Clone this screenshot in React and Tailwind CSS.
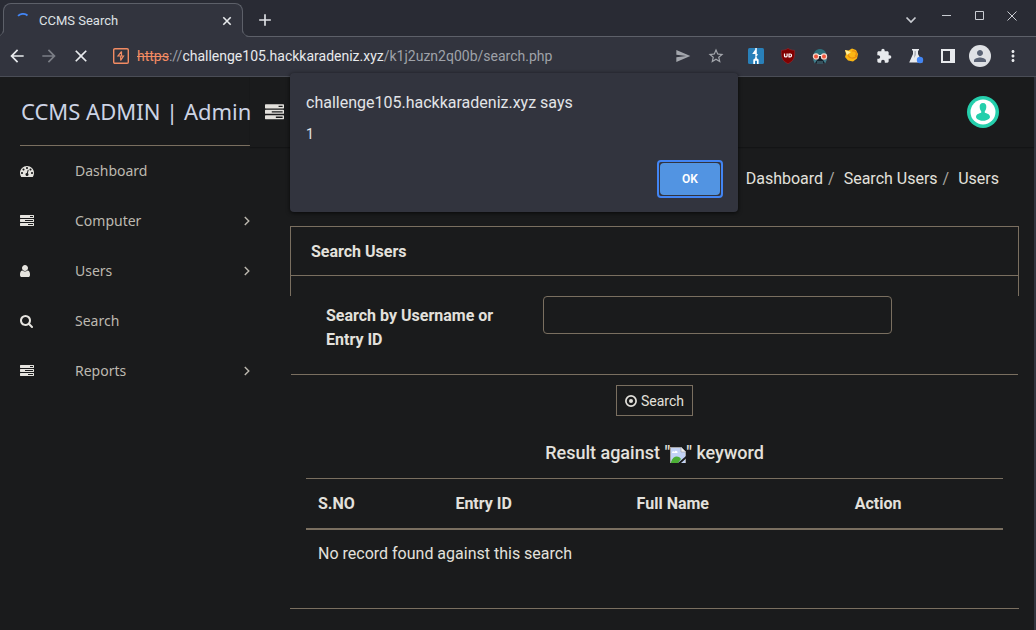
import React from "react";
import { MdArrowBack, MdArrowForward, MdClose, MdSend, MdStarOutline, MdExtension, MdPerson, MdMoreVert, MdAdd } from "react-icons/md";

const TASKS =
  "M1024 1408h640v-128h-640v128zm-384-512h1024v-128h-1024v128zm640-512h384v-128h-384v128zm512 832v256q0 26-19 45t-45 19h-1664q-26 0-45-19t-19-45v-256q0-26 19-45t45-19h1664q26 0 45 19t19 45zm0-512v256q0 26-19 45t-45 19h-1664q-26 0-45-19t-19-45v-256q0-26 19-45t45-19h1664q26 0 45 19t19 45zm0-512v256q0 26-19 45t-45 19h-1664q-26 0-45-19t-19-45v-256q0-26 19-45t45-19h1664q26 0 45 19t19 45z";
const GAUGE =
  "M384 1152q0-53-37.5-90.5t-90.5-37.5-90.5 37.5-37.5 90.5 37.5 90.5 90.5 37.5 90.5-37.5 37.5-90.5zm192-448q0-53-37.5-90.5t-90.5-37.5-90.5 37.5-37.5 90.5 37.5 90.5 90.5 37.5 90.5-37.5 37.5-90.5zm428 481l101-382q6-26-7.5-48.5t-38.5-29.5-48 6.5-30 39.5l-101 382q-60 5-107 43.5t-63 98.5q-20 77 20 146t117 89 146-20 89-117q16-60-6-117t-72-91zm660-33q0-53-37.5-90.5t-90.5-37.5-90.5 37.5-37.5 90.5 37.5 90.5 90.5 37.5 90.5-37.5 37.5-90.5zm-640-640q0-53-37.5-90.5t-90.5-37.5-90.5 37.5-37.5 90.5 37.5 90.5 90.5 37.5 90.5-37.5 37.5-90.5zm448 192q0-53-37.5-90.5t-90.5-37.5-90.5 37.5-37.5 90.5 37.5 90.5 90.5 37.5 90.5-37.5 37.5-90.5zm320 448q0 261-141 483-19 29-54 29h-1402q-35 0-54-29-141-221-141-483 0-182 71-348t191-286 286-191 348-71 348 71 286 191 191 286 71 348z";
const USER =
  "M1536 1399q0 109-62.5 187t-150.5 78h-854q-88 0-150.5-78t-62.5-187q0-85 8.5-160.5t31.5-152 58.5-131 94-89 134.5-34.5q131 128 313 128t313-128q76 0 134.5 34.5t94 89 58.5 131 31.5 152 8.5 160.5zm-256-887q0 159-112.5 271.5t-271.5 112.5-271.5-112.5-112.5-271.5 112.5-271.5 271.5-112.5 271.5 112.5 112.5 271.5z";
const LENS =
  "M1216 832q0-185-131.5-316.5t-316.5-131.5-316.5 131.5-131.5 316.5 131.5 316.5 316.5 131.5 316.5-131.5 131.5-316.5zm512 832q0 52-38 90t-90 38q-54 0-90-38l-343-342q-179 124-399 124-143 0-273.5-55.5t-225-150-150-225-55.5-273.5 55.5-273.5 150-225 225-150 273.5-55.5 273.5 55.5 225 150 150 225 55.5 273.5q0 220-124 399l343 343q37 37 37 90z";

const MENU = [
  { label: "Dashboard", path: GAUGE, box: "0 0 1792 1792" },
  { label: "Computer", path: TASKS, box: "0 0 1792 1792", more: true },
  { label: "Users", path: USER, box: "256 0 1792 1792", more: true },
  { label: "Search", path: LENS, box: "64 0 1792 1792" },
  { label: "Reports", path: TASKS, box: "0 0 1792 1792", more: true },
];

function TabStrip() {
  return (
    <div className="flex h-[37px] items-end border-b border-[#5d6069] bg-[#292b34]">
      <div className="relative -mb-px ml-[3px] flex h-[34px] w-60 items-center rounded-t-lg border border-b-0 border-[#5d6069] bg-[#32343e] px-[11px]">
        <svg className="absolute bottom-0 -left-2 h-2 w-2" viewBox="0 0 8 8" fill="none">
          <path d="M0 8C5 8 8 5 8 0V8Z" fill="#32343e" />
          <path d="M0 7.5C4.500 7.500 7.500 4.500 7.500 0" stroke="#5d6069" />
        </svg>
        <svg className="absolute -right-2 bottom-0 h-2 w-2" viewBox="0 0 8 8" fill="none">
          <path d="M8 8C3 8 0 5 0 0V8Z" fill="#32343e" />
          <path d="M8 7.500C3.500 7.500 .5 4.500 .5 0" stroke="#5d6069" />
        </svg>
        <svg className="h-4 w-4" viewBox="0 0 16 16" fill="none">
          <path d="M3 2.800A7.200 7.200 0 0 1 12.500 2.500" stroke="#4285f4" strokeWidth="1.800" />
        </svg>
        <span className="ml-2 flex-1 text-[13px] text-[#dfe1e5]">CCMS Search</span>
        <button aria-label="Close tab" className="-mr-1 text-[#e8eaed]">
          <svg className="h-4 w-4" viewBox="0 0 16 16" stroke="currentColor" strokeWidth="1.600">
            <path d="M4.300 4.300l7.400 7.400M11.700 4.300l-7.400 7.400" />
          </svg>
        </button>
      </div>
      <button aria-label="New tab" className="ml-3 flex h-8 items-center text-[#dfe1e5]">
        <MdAdd size={20} />
      </button>
      <div className="mr-[18px] ml-auto flex h-9 items-center gap-[21px] text-[#c9ccd2]">
        <button aria-label="Search tabs" className="mt-1 mr-0.5">
          <svg className="h-3 w-3" viewBox="0 0 12 12" fill="none" stroke="currentColor" strokeWidth="1.700">
            <path d="M1.500 3.500L6 8l4.500-4.500" />
          </svg>
        </button>
        <button aria-label="Minimize" className="mb-1">
          <svg className="h-3 w-3" viewBox="0 0 12 12" stroke="currentColor"><path d="M2 5.500h9" /></svg>
        </button>
        <button aria-label="Maximize" className="mb-1">
          <svg className="h-3 w-3" viewBox="0 0 12 12" fill="none" stroke="currentColor"><path d="M2.500 1.500h8v8h-8z" /></svg>
        </button>
        <button aria-label="Close" className="mb-1">
          <svg className="h-3 w-3" viewBox="0 0 12 12" stroke="currentColor"><path d="M1.500 1.500l9 9M10.500 1.500l-9 9" /></svg>
        </button>
      </div>
    </div>
  );
}

function Toolbar() {
  return (
    <div className="flex h-10 items-center border-b border-[#4a4d56] bg-[#32343e] pr-3.5 pb-px pl-[7px] text-[#e8eaed]">
      <div className="flex gap-3">
        <button aria-label="Back"><MdArrowBack size={20} /></button>
        <button aria-label="Forward" className="text-[#7b7e86]"><MdArrowForward size={20} /></button>
        <button aria-label="Stop"><MdClose size={20} /></button>
      </div>
      <svg className="mr-2 ml-[22px] h-4 w-4 shrink-0" viewBox="0 0 16 16" fill="none">
        <rect x=".7" y=".7" width="14.600" height="14.600" rx="1.200" stroke="#f28b63" strokeWidth="1.400" />
        <path d="M8.600 3.300L5 8h5.500L7.500 12.600M8.500 3.500V8M7.700 8v4.400" stroke="#f28b63" strokeWidth="1.200" />
      </svg>
      <div className="flex-1 text-sm text-[#9fa2a9]">
        <span className="text-[#f28b63] line-through">https</span>://
        <span className="text-[#e8eaed]">challenge105.hackkaradeniz.xyz</span>/k1j2uzn2q00b/search.php
      </div>
      <div className="flex items-center gap-4 text-[#a3a6ac]">
        <button aria-label="Share"><MdSend size={16} /></button>
        <button aria-label="Bookmark"><MdStarOutline size={18} /></button>
      </div>
      <div className="ml-[23px] flex items-center gap-4">
        <svg className="h-4 w-4" viewBox="0 0 16 16">
          <rect width="16" height="16" rx="1.500" fill="#2980b9" />
          <path d="M8.800 0v6.200h1.400L8.500 8.500H7.300V6H4.200L7.300 1.500V0z" fill="#fff" />
          <path d="M7.200 8.500h1.600v1.700l1.800 1.300V16H9v-3.200H7V16H5.300v-4.500l1.900-1.300z" fill="#fff" />
        </svg>
        <svg className="h-4 w-4" viewBox="0 0 16 16">
          <path d="M8 .3c2 1.500 4 2 6.500 2C15 9 14 13 8 15.700 2 13 1 9 1.500 2.300 4 2.300 6 1.800 8 .3z" fill="#800000" stroke="#a32a30" strokeWidth=".5" />
          <path d="M4.500 5.500V8c0 1.200 2.600 1.200 2.600 0V5.500M9 6v2.900h1.200c1.700 0 1.700-2.900 0-2.900z" fill="none" stroke="#fff" strokeWidth="1.200" />
        </svg>
        <svg className="h-4 w-4" viewBox="0 0 16 16">
          <path d="M1.500 8C1.500-1.500 14.500-1.500 14.500 8z" fill="#2c6e79" />
          <path d="M3 8h10v7H3z" fill="#15202b" />
          <path d="M5 13h6v3H5z" fill="#36515c" />
          <path d="M.8 11l2 4.500L5 12zM15.200 11l-2 4.500L11 12z" fill="#417f8d" />
          <circle cx="4" cy="8.500" r="2.600" fill="#f0573c" stroke="#f3d6cb" strokeWidth="1.200" />
          <circle cx="12" cy="8.500" r="2.600" fill="#f0573c" stroke="#f3d6cb" strokeWidth="1.200" />
          <path d="M6.500 7.500h3" stroke="#fff" />
        </svg>
        <svg className="h-4 w-4" viewBox="0 0 16 16">
          <path d="M1 2l3.500.5L8 .5l4 1.500 2 4-1 4.500L9 13.500 4 12.500 1 9 2 6z" fill="#fbb613" />
          <path d="M4 4c-1 6 5 8 9 4M8 3c4-1 6 3 3 5" fill="none" stroke="#e98c10" strokeWidth="1.200" />
          <path d="M1 2l6 2-4 3z" fill="#fff09b" />
        </svg>
        <button aria-label="Extensions"><MdExtension size={16} /></button>
        <svg className="h-4 w-4" viewBox="0 0 16 16">
          <path d="M4 1h7v1.500h-1V6l4.500 8.500H1.200L5 6V2.500H4z" fill="#e8eaed" />
          <path d="M6.500 3h1.500v4l-2 3z" fill="#777c85" opacity=".5" />
          <circle cx="12" cy="12" r="3.200" fill="#4285f4" />
        </svg>
        <svg className="h-4 w-4" viewBox="0 0 16 16">
          <path fillRule="evenodd" d="M1 1h14v14H1zM3 3v10h7V3z" fill="#e8eaed" />
        </svg>
        <button aria-label="Profile" className="-mx-[3px] flex h-[22px] w-[22px] items-center justify-center rounded-full bg-[#dfe1e5] text-[#5a6274]">
          <MdPerson size={18} />
        </button>
        <button aria-label="Menu"><MdMoreVert size={18} /></button>
      </div>
    </div>
  );
}

function AlertDialog() {
  return (
    <div role="alertdialog" aria-labelledby="alert-title" className="absolute top-[73px] left-[290px] z-10 w-[448px] rounded bg-[#32343e] pt-[18px] pr-[15px] pb-3.5 pl-4 text-[#e2e4e8] shadow-[0_1px_4px_rgba(0,0,0,0.7)]">
      <h2 id="alert-title" className="text-base">challenge105.hackkaradeniz.xyz says</h2>
      <p className="mt-2 text-sm leading-[22px]">1</p>
      <div className="mt-[15px] flex justify-end">
        <button className="rounded border-2 border-[#4285f4] p-px">
          <span className="flex h-8 w-[60px] items-center justify-center rounded-sm bg-[#5294e2] text-xs font-semibold text-white">OK</span>
        </button>
      </div>
    </div>
  );
}

function Sidebar() {
  return (
    <aside className="w-[250px] shrink-0 pl-5 font-['Noto_Sans',sans-serif]">
      <div className="flex h-[69px] items-center border-b border-[#7a6f60] pl-px text-[22px] whitespace-nowrap text-[#ccd3e4]">
        CCMS ADMIN | Admin
      </div>
      <nav>
        {MENU.map((item) => (
          <a key={item.label} href="#" className="flex h-[50px] items-center text-sm text-[#bdb9b0]">
            <svg className="h-3.5 w-3.5 text-[#e6e4df]" viewBox={item.box} fill="currentColor">
              <path d={item.path} />
            </svg>
            <span className="ml-[41px] flex-1">{item.label}</span>
            {item.more && (
              <svg className="h-2.5 w-1.5" viewBox="0 0 6 10" fill="none" stroke="currentColor" strokeWidth="1.400">
                <path d="M.8 1l4 4-4 4" />
              </svg>
            )}
          </a>
        ))}
      </nav>
    </aside>
  );
}

function BrokenImage() {
  return (
    <svg className="-mb-1 inline h-4 w-4 align-baseline" viewBox="0 0 16 16" role="img" aria-label="Broken image">
      <path d="M0 0h11l5 5v11H0z" fill="#c3d3f5" />
      <path d="M0 16V1h1V0h10M.5 0v16M0 .5h11l4.500 4.500v11" fill="none" stroke="#a5a5a5" />
      <path d="M11 0v5h5z" fill="#f2f2f2" stroke="#999" strokeWidth=".6" />
      <path d="M2 6c0-2 2-2 2.500-1C5 3 8 3.500 7.500 6z" fill="#fff" />
      <path d="M1 15c2-6 7-7 10-3l-3 4H1z" fill="#4caf35" />
      <path d="M8 16l8-7v2.500L11 16z" fill="#1a1b1c" />
    </svg>
  );
}

function SearchPanel() {
  return (
    <section className="border-b border-[#7a6f60]">
      <div className="border border-b-0 border-[#7a6f60]">
        <h1 className="h-12 px-5 pt-[13px] text-base font-bold">Search Users</h1>
        <div className="h-[21px] border-t border-[#7a6f60]" />
      </div>
      <form onSubmit={(e) => e.preventDefault()}>
        <div className="mx-px flex h-[79px] border-b border-[#7a6f60] pr-[126px] pl-[35px]">
          <label htmlFor="query" className="w-[217px] shrink-0 pt-2 pr-8 text-base font-bold">
            Search by Username or Entry ID
          </label>
          <input id="query" className="h-[38px] min-w-0 flex-1 rounded border border-[#7a6f60] bg-transparent px-3 outline-none" />
        </div>
        <div className="mt-2.5 flex justify-center">
          <button className="flex h-[31px] items-center gap-1 border border-[#7a6f60] px-2 text-sm">
            <svg className="h-3 w-3" viewBox="0 0 12 12">
              <circle cx="6" cy="6" r="5.100" fill="none" stroke="currentColor" strokeWidth="1.700" />
              <circle cx="6" cy="6" r="2" fill="currentColor" />
            </svg>
            Search
          </button>
        </div>
      </form>
      <div className="px-4 pb-[30px]">
        <h2 className="mt-6 mb-[13px] text-center text-lg leading-[25px] font-medium">
          Result against "<BrokenImage />" keyword
        </h2>
        <table className="w-full text-left text-base">
          <thead>
            <tr className="h-[50px] border-t border-b-2 border-[#7a6f60]">
              <th className="w-[20%] pt-px pl-3 font-bold">S.NO</th>
              <th className="w-[26%] pt-px pl-2.5 font-bold">Entry ID</th>
              <th className="w-[31%] pt-px pl-2.5 font-bold">Full Name</th>
              <th className="pt-px pl-3 font-bold">Action</th>
            </tr>
          </thead>
          <tbody>
            <tr className="h-[49px]">
              <td colSpan={4} className="pl-3">No record found against this search</td>
            </tr>
          </tbody>
        </table>
      </div>
    </section>
  );
}

export default function App() {
  return (
    <div className="relative flex min-h-screen flex-col bg-[#1a1b1c] font-[Roboto,sans-serif]">
      <TabStrip />
      <Toolbar />
      <AlertDialog />
      <div className="flex flex-1 border-r-2 border-[#32343e] text-[#e3e1dc]">
        <Sidebar />
        <main className="min-w-0 flex-1">
          <header className="flex h-[70px] items-center justify-between pr-[35px] pl-[15px] shadow-[0_1px_1px_rgba(0,0,0,0.25)]">
            <button aria-label="Toggle menu">
              <svg className="h-[19px] w-[19px]" viewBox="0 0 1792 1792" fill="currentColor"><path d={TASKS} /></svg>
            </button>
            <button aria-label="Account">
              <svg className="h-8 w-8" viewBox="0 0 32 32">
                <circle cx="16" cy="16" r="16" fill="#25cfac" />
                <circle cx="16" cy="16" r="12.500" fill="#fff" />
                <path d="M16 7c2.500 0 3.500 1.800 3.300 4.200-.1 2-.8 3.200-1.500 4v1.600c2 .8 5.200 1.200 5.200 4.200 0 1-2 3.800-7 3.800s-7-2.800-7-3.800c0-3 3.200-3.400 5.200-4.200v-1.600c-.7-.8-1.400-2-1.500-4C12.500 8.800 13.500 7 16 7z" fill="#25cfac" />
              </svg>
            </button>
          </header>
          <nav aria-label="Breadcrumb" className="flex h-[63px] items-center justify-end gap-[5px] pr-[35px] text-base">
            <a href="#">Dashboard</a>
            <span className="mr-1 text-[#aaa7a1]">/</span>
            <a href="#">Search Users</a>
            <span className="mr-1 text-[#aaa7a1]">/</span>
            <span>Users</span>
          </nav>
          <div className="mt-4 pr-[15px] pl-10">
            <SearchPanel />
          </div>
        </main>
      </div>
    </div>
  );
}
